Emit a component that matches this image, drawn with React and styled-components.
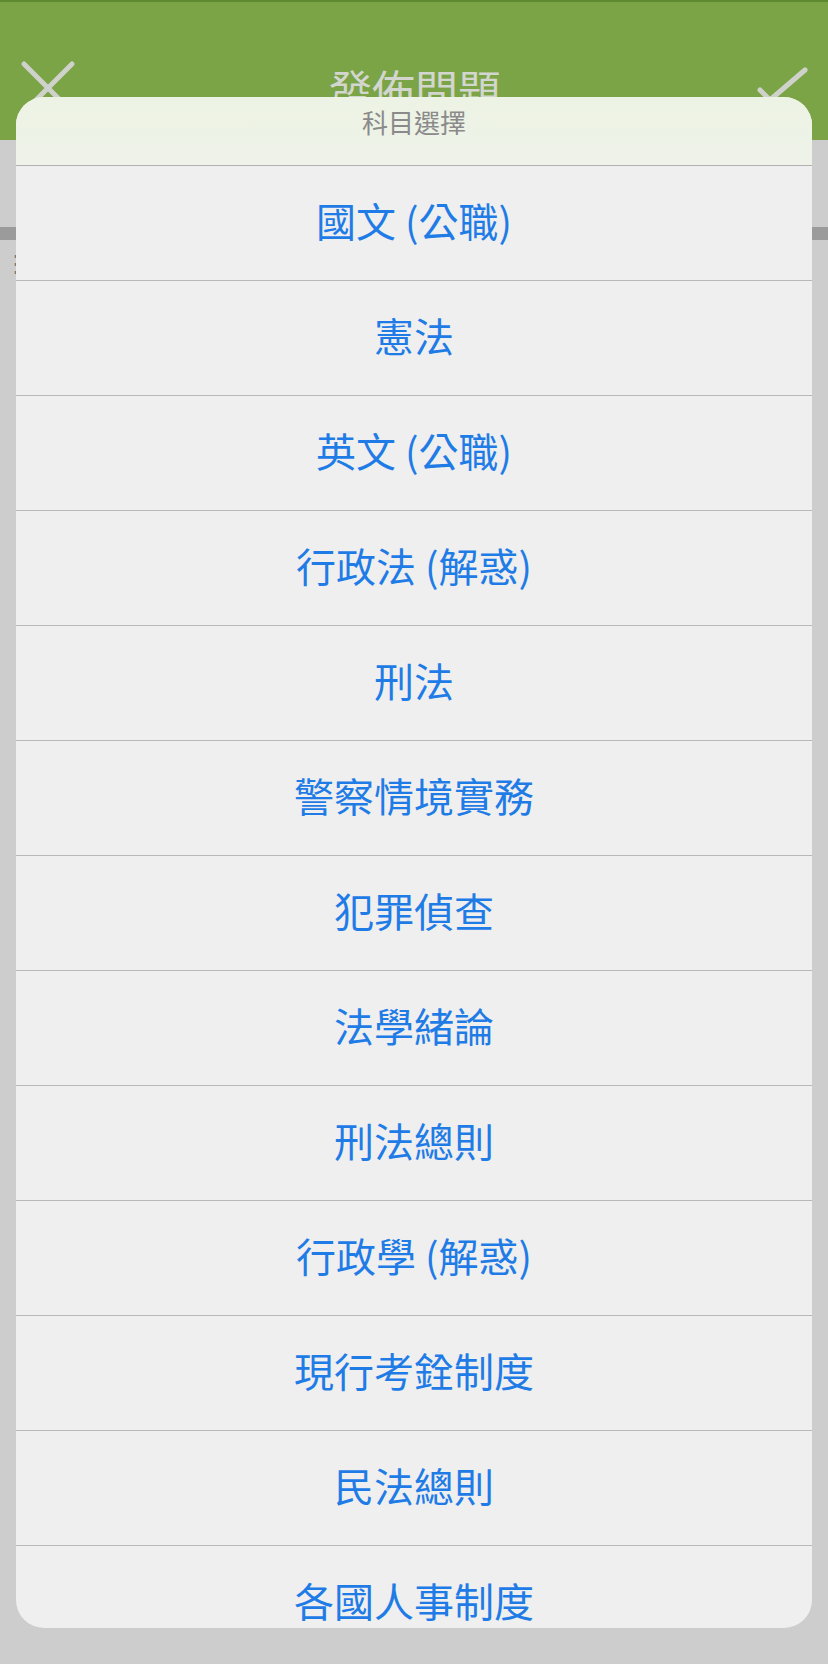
import React from "react"
import styled, { createGlobalStyle } from "styled-components"

const GlobalStyle = createGlobalStyle`
  html, body {
    margin: 0;
    padding: 0;
    background: #cdcdcd;
  }
  * {
    box-sizing: border-box;
  }
`

const subjects = [
  "國文 (公職)",
  "憲法",
  "英文 (公職)",
  "行政法 (解惑)",
  "刑法",
  "警察情境實務",
  "犯罪偵查",
  "法學緒論",
  "刑法總則",
  "行政學 (解惑)",
  "現行考銓制度",
  "民法總則",
  "各國人事制度",
]

const FONT = `"Noto Sans CJK TC", "Noto Sans", "Liberation Sans", sans-serif`

const App = () => (
  <>
    <GlobalStyle />
    <Page>
      <NavBar>
        <NavButton>
          <svg width="56" height="56" viewBox="0 0 56 56">
            <path d="M4 4 L52 52 M52 4 L4 52" stroke="#cfd2cb" strokeWidth="5" strokeLinecap="round" fill="none" />
          </svg>
        </NavButton>
        <NavTitle>發佈問題</NavTitle>
        <NavButton>
          <svg width="56" height="56" viewBox="0 0 56 56">
            <path d="M6 30 L16 40 L51 10" stroke="#cfd2cb" strokeWidth="5" strokeLinecap="round" fill="none" />
          </svg>
        </NavButton>
      </NavBar>
      <Content>
        <Toolbar />
        <MoreDots>⋮</MoreDots>
      </Content>

      <Sheet>
        <SheetHeader>
          <SheetTitle>科目選擇</SheetTitle>
        </SheetHeader>
        <OptionList>
          {subjects.map((s) => (
            <Option key={s}>{s}</Option>
          ))}
        </OptionList>
      </Sheet>
    </Page>
  </>
)

export default App

const Page = styled.div`
  position: relative;
  width: 828px;
  height: 1664px;
  overflow: hidden;
  background: #cdcdcd;
  font-family: ${FONT};
`

const NavBar = styled.div`
  height: 140px;
  background: #7aa446;
  border-top: 2px solid #5f8a30;
  display: flex;
  align-items: center;
  justify-content: space-between;
  padding: 34px 18px 0 20px;
`

const NavButton = styled.div`
  width: 56px;
  height: 56px;
  display: flex;
  align-items: center;
  justify-content: center;
`

const NavTitle = styled.div`
  font-size: 43px;
  color: #d3d6cf;
  line-height: 1;
`

const Content = styled.div`
  padding-top: 87px;
`

const Toolbar = styled.div`
  height: 13px;
  background: #9b9b9b;
`

const MoreDots = styled.div`
  margin: 10px 0 0 4px;
  color: #777;
  font-size: 24px;
  line-height: 1;
`

const Sheet = styled.div`
  position: absolute;
  left: 16px;
  top: 97px;
  width: 796px;
  height: 1531px;
  border-radius: 28px;
  overflow: hidden;
  background: #efefef;
  display: flex;
  flex-direction: column;
`

const SheetHeader = styled.div`
  height: 69px;
  flex: none;
  background: linear-gradient(#edf3e4, #eef2e9);
  border-bottom: 1px solid #b1b1b1;
  display: flex;
  justify-content: center;
  padding-top: 9px;
`

const SheetTitle = styled.div`
  font-size: 26px;
  line-height: 32px;
  color: #8a8a8a;
`

const OptionList = styled.div`
  display: flex;
  flex-direction: column;
`

const Option = styled.div`
  height: 115px;
  flex: none;
  display: flex;
  align-items: center;
  justify-content: center;
  border-bottom: 1px solid #b8b8b8;
  font-size: 40px;
  color: #1f7ce6;
  padding-bottom: 6px;
`
